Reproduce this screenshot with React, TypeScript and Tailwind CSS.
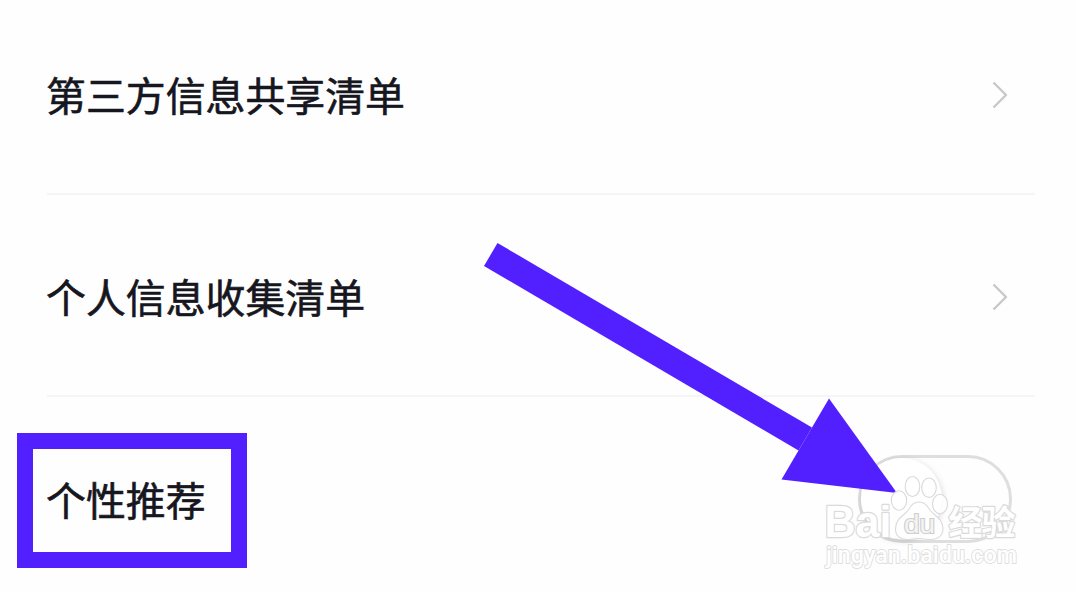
const rows = [
  { label: "第三方信息共享清单", type: "link" },
  { label: "个人信息收集清单", type: "link" },
  { label: "个性推荐", type: "switch" },
];

function Chevron() {
  return (
    <svg className="mt-[4px] mr-[27px] h-7 w-4" viewBox="0 0 16 28" fill="none">
      <path
        d="M1.500 1.500 14 14 1.500 26.500"
        stroke="#c8c8c8"
        strokeWidth="2.4"
        strokeLinejoin="round"
      />
    </svg>
  );
}

function Switch() {
  return (
    <div className="mt-px mr-[23px] flex h-[88px] w-[154px] rounded-full border-[3.5px] border-[#dedede] bg-[#fefefe]">
      <div className="size-[81px] rounded-full bg-white shadow-[1px_2px_6px_rgba(0,0,0,0.15)]" />
    </div>
  );
}

function Arrow() {
  return (
    <svg
      className="pointer-events-none absolute inset-0 h-[592px] w-[1076px]"
      viewBox="0 0 1076 592"
      fill="#5220ff"
    >
      <path d="M497.5 243 812 427.5 798.5 450.5 484 266Z" />
      <path d="M829 398.5 897 493 781.5 479.5Z" />
    </svg>
  );
}

function Watermark() {
  return (
    <svg
      className="pointer-events-none absolute top-[470px] left-[820px] h-[110px] w-[210px]"
      viewBox="820 470 210 110"
      fill="#fff"
      stroke="#dadada"
      strokeWidth="1.1"
    >
      <text
        x="824.5"
        y="537"
        textLength="67"
        lengthAdjust="spacingAndGlyphs"
        strokeWidth="2.4"
        strokeLinejoin="round"
        className="font-['Liberation_Sans',sans-serif] text-[44px] font-bold [paint-order:stroke]"
      >
        Bai
      </text>
      <g fillOpacity="0.85">
        <ellipse cx="899" cy="500.5" rx="7.7" ry="9.7" />
        <ellipse cx="912.5" cy="486.5" rx="7.3" ry="10" />
        <ellipse cx="929" cy="487.7" rx="7.3" ry="9.7" />
        <ellipse cx="940" cy="504" rx="7.5" ry="9.7" />
        <path d="M919 502c-5 0-8 3-10.500 8-2.500 4-13 8-13 19 0 7 5 10.500 11 10.500 5 0 8-1 12.500-1s7 1 12 1c7 0 12-4 12-11 0-10-9.500-13-13-18.500-3-5-6-8-11-8Z" />
      </g>
      <text
        x="904"
        y="532.5"
        textLength="31"
        lengthAdjust="spacingAndGlyphs"
        fill="#f4f4f4"
        stroke="#cecece"
        strokeWidth="2.2"
        className="font-['Liberation_Sans',sans-serif] text-[26px] [paint-order:stroke]"
      >
        du
      </text>
      <text
        x="948.5"
        y="535"
        textLength="67"
        strokeWidth="2.4"
        strokeLinejoin="round"
        className="font-['Noto_Sans_CJK_SC',sans-serif] text-[34px] font-bold [paint-order:stroke]"
      >
        经验
      </text>
      <text
        x="826"
        y="563"
        textLength="191"
        lengthAdjust="spacingAndGlyphs"
        stroke="#dedede"
        strokeWidth="1.800"
        strokeLinejoin="round"
        className="font-['Roboto',sans-serif] text-[23px] font-medium [paint-order:stroke]"
      >
        jingyan.baidu.com
      </text>
    </svg>
  );
}

export default function App() {
  return (
    <main className="relative h-[592px] w-[1076px] overflow-hidden bg-[#fefefe] font-['Noto_Sans_CJK_SC',sans-serif]">
      <ul className="-mt-[7px] pr-[41px] pl-[47px]">
        {rows.map((row) => (
          <li
            key={row.label}
            className="flex h-[202px] items-center justify-between border-b-2 border-[#f5f5f5] last:border-b-0"
          >
            <span className="mt-[2px] -ml-px text-[39.9px] leading-none text-[#16161f] [-webkit-text-stroke:0.6px_#16161f]">
              {row.label}
            </span>
            {row.type === "link" ? <Chevron /> : <Switch />}
          </li>
        ))}
      </ul>
      <div className="absolute top-[433px] left-[17px] h-[135px] w-[230px] border-[16px] border-[#5220ff]" />
      <Arrow />
      <Watermark />
    </main>
  );
}
